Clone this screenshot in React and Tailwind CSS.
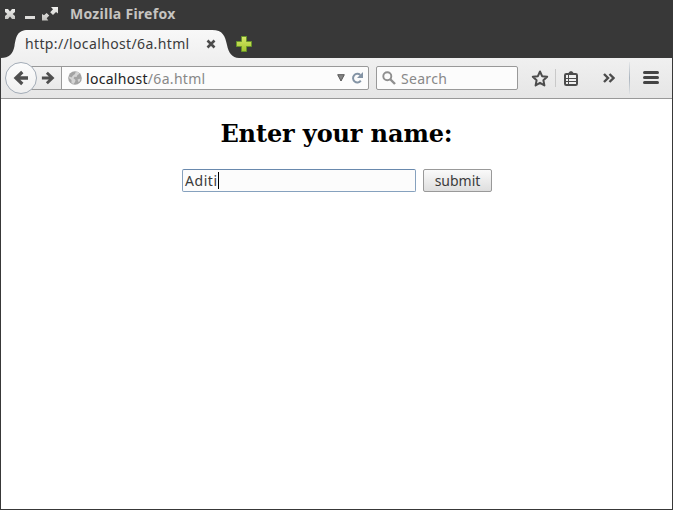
import React from "react";

const ui = "font-['Noto_Sans','Open_Sans',sans-serif]";

function WindowControls() {
  return (
    <svg width="60" height="28" viewBox="0 0 60 28" className="block shrink-0">
      <defs>
        <linearGradient id="ctl" x1="0" y1="8" x2="0" y2="20" gradientUnits="userSpaceOnUse">
          <stop offset="0" stopColor="#f0f0ee" />
          <stop offset="1" stopColor="#c4c3c0" />
        </linearGradient>
      </defs>
      <path d="M5 9h3l2 2.500L12 9h3v3l-2.300 2L15 16v3h-3l-2-2.500L8 19H5v-3l2.300-2L5 12z" fill="url(#ctl)" />
      <path d="M25 16h10v3H25z" fill="#dedddb" />
      <path d="M51 7H58v6.500l-2-1.500-3 3-2.800-2.800 2.800-3zM42 14l2 1.300 2.600-2.400 2.700 2.700-2.600 2.700 1.600 2.200H42z" fill="url(#ctl)" />
      <path d="M48.200 13.300l1.800 1.800" stroke="#383838" strokeWidth="1" />
    </svg>
  );
}

function TabShape() {
  return (
    <svg width="240" height="28" viewBox="0 0 240 28" className="absolute left-0 top-0">
      <defs>
        <linearGradient id="tab" x1="0" y1="0" x2="0" y2="1">
          <stop offset="0" stopColor="#f8f8f8" />
          <stop offset="1" stopColor="#f0f0f0" />
        </linearGradient>
      </defs>
      <path d="M1 28C9 28 13 24 14.500 16C16 7 17 0 28 0H212C223 0 225 6 227 15C228.500 23 232 27.500 239 28Z" fill="url(#tab)" />
    </svg>
  );
}

function Plus() {
  return (
    <svg width="18" height="18" viewBox="0 0 18 18" className="block shrink-0">
      <defs>
        <linearGradient id="plus" x1="0" y1="0" x2="0" y2="1">
          <stop offset="0" stopColor="#d7e86b" />
          <stop offset="1" stopColor="#a3c52c" />
        </linearGradient>
      </defs>
      <path d="M6.500 1.500h5v5h5v5h-5v5h-5v-5h-5v-5h5z" fill="url(#plus)" stroke="#68952a" />
    </svg>
  );
}

function Arrow({ flip, size }) {
  return (
    <svg width={size} height={size} viewBox="0 0 16 16" className={flip ? "block -scale-x-100" : "block"}>
      <path d="M9.300 2L3 8l6.300 6M3.500 8H15" fill="none" stroke="#4f4f4f" strokeWidth="3.300" />
    </svg>
  );
}

function Globe() {
  return (
    <svg width="14" height="14" viewBox="0 0 14 14" className="block shrink-0">
      <circle cx="7" cy="7" r="6.800" fill="#a3a3a3" />
      <path d="M7.500 1.200L10 1l1.500 1.800L9.500 4 8.500 6 6.500 5.800 5.500 7.300 7.500 9l-.5 2-1.500 2-2-1L3.500 9 1 7l.5-1.500 2 1L5 4.500 7 3zM9.500 8.500l3-1-.5 2.500-1.500 1.300z" fill="#d4d4d4" />
    </svg>
  );
}

function Reload() {
  return (
    <svg width="13" height="12" viewBox="0 0 13 12" className="block shrink-0">
      <path d="M9.300 3A4.300 4.300 0 1 0 9.800 8.700" fill="none" stroke="#8494a5" strokeWidth="2" />
      <path d="M12 0v6H6z" fill="#8494a5" />
    </svg>
  );
}

function Search() {
  return (
    <svg width="14" height="14" viewBox="0 0 14 14" className="block shrink-0">
      <circle cx="5.300" cy="5.200" r="4" fill="none" stroke="#8f8f8f" strokeWidth="1.900" />
      <path d="M8 8l5 5" stroke="#8f8f8f" strokeWidth="2.400" />
    </svg>
  );
}

function Star() {
  return (
    <svg width="18" height="17" viewBox="0 0 18 17" className="block shrink-0">
      <path d="M9 1.500l2.100 4.700 5.100.5-3.800 3.500 1 5.200L9 12.800l-4.400 2.600 1-5.200L1.800 6.700l5.100-.5z" fill="none" stroke="#4c4c4c" strokeWidth="2" strokeLinejoin="round" />
    </svg>
  );
}

function Clipboard() {
  return (
    <svg width="14" height="15" viewBox="0 0 14 15" className="block shrink-0">
      <path d="M3.500 3L6 .3h2L10.500 3z" fill="#4c4c4c" />
      <rect x="1" y="3" width="12" height="11" rx="1.300" fill="#f0f0f0" stroke="#4c4c4c" strokeWidth="2" />
      <path d="M2 7.500h10M2 10.500h10" stroke="#4c4c4c" />
      <path d="M4.500 4v9" stroke="#4c4c4c" />
    </svg>
  );
}

function Overflow() {
  return (
    <svg width="12" height="10" viewBox="0 0 12 10" className="block shrink-0">
      <path d="M1 1l4 4-4 4M6.500 1l4 4-4 4" fill="none" stroke="#4c4c4c" strokeWidth="2.400" />
    </svg>
  );
}

export default function App() {
  return (
    <div className={`flex h-[510px] w-[673px] flex-col overflow-hidden bg-[#383838] ${ui}`}>
      <header className="flex h-[30px] shrink-0 items-start">
        <WindowControls />
        <h1 className="ml-[10px] whitespace-nowrap text-[14px] font-bold leading-[28px] tracking-[0.27px] text-[#c6c4c1]">Mozilla Firefox</h1>
      </header>

      <div className="flex h-7 shrink-0 items-center">
        <div className="relative flex h-7 w-[235px] shrink-0 items-center">
          <TabShape />
          <span className="relative ml-[25px] w-[181px] whitespace-nowrap text-[14px] leading-7 tracking-[0.36px] text-[#3b3b3b]">http://localhost/6a.html</span>
          <svg width="10" height="10" viewBox="0 0 10 10" className="relative block">
            <path d="M1.500 1.500l7 7M8.500 1.500l-7 7" stroke="#4c4c4c" strokeWidth="2.600" />
          </svg>
        </div>
        <Plus />
      </div>

      <div className="flex min-h-0 flex-1 flex-col border-x border-b border-[#383838]">
        <nav className="flex h-[41px] shrink-0 items-center border-b border-[#999] bg-linear-to-b from-[#f0f0f0] to-[#e6e6e6]">
          <div className="z-10 ml-1 flex size-8 shrink-0 items-center justify-center rounded-full border border-[#a3acb7] bg-linear-to-b from-[#fcfcfc] to-[#f0f0f0]">
            <Arrow size={16} />
          </div>
          <div className="-ml-2 flex h-6 w-[340px] shrink-0 items-center rounded-r-[2px] border border-[#999] bg-[#fcfcfc]">
            <div className="flex h-full w-8 shrink-0 items-center border-r border-[#999] bg-linear-to-b from-[#f3f3f3] to-[#e8e8e8] pl-[11px]">
              <Arrow flip size={14} />
            </div>
            <div className="ml-[6px]"><Globe /></div>
            <span className="ml-[4px] flex-1 whitespace-nowrap pt-[2px] text-[14px] leading-[22px] tracking-[0.3px] text-[#888]">
              <span className="text-[#222]">localhost</span>/6a.html
            </span>
            <svg width="8" height="8" viewBox="0 0 8 8" className="mr-[6px] block">
              <path d="M.7.7h6.600L4 7z" fill="#858585" stroke="#555" />
            </svg>
            <Reload />
            <span className="w-1" />
          </div>
          <div className="ml-[7px] flex h-6 w-[142px] shrink-0 items-center rounded-[2px] border border-[#999] bg-[#fcfcfc] pl-[5px]">
            <Search />
            <span className="ml-[5px] pt-[2px] text-[14px] leading-[22px] tracking-[0.3px] text-[#888]">Search</span>
          </div>
          <div className="ml-[13px]"><Star /></div>
          <div className="ml-[6px] h-[18px] w-px bg-[#c9c9c9]" />
          <div className="ml-2"><Clipboard /></div>
          <div className="ml-[25px]"><Overflow /></div>
          <div className="ml-[14px] h-8 w-px bg-linear-to-b from-[#e5e7e9] via-[#aab4be] to-[#e0e2e4]" />
          <div className="mb-[2px] ml-[13px] flex w-4 flex-col gap-[2px]">
            <span className="h-[3px] rounded-full bg-[#444]" />
            <span className="h-[3px] rounded-full bg-[#444]" />
            <span className="h-[3px] rounded-full bg-[#444]" />
          </div>
        </nav>

        <main className="flex flex-1 flex-col items-center bg-white">
          <h2 className="mt-[21px] whitespace-nowrap font-['DejaVu_Serif',serif] text-[24px] font-bold leading-7 tracking-[-0.12px] text-black">Enter your name:</h2>
          <div className="ml-px mt-[21px] flex h-[23px] gap-[7px]">
            <div className="flex w-[234px] items-center rounded-[2px] border border-[#86a1be] border-t-[#6989ad] bg-[#fcfcfc] pl-[2px] text-[14px] leading-[21px] text-[#3b3b3b]">
              <span className="tracking-[0.55px]">Aditi</span>
              <span className="h-[17px] w-px bg-black" />
            </div>
            <button className="w-[69px] rounded-[2px] border border-[#999] bg-linear-to-b from-[#fafafa] to-[#dedede] text-[14px] leading-[21px] text-[#3b3b3b]">submit</button>
          </div>
        </main>
      </div>
    </div>
  );
}
